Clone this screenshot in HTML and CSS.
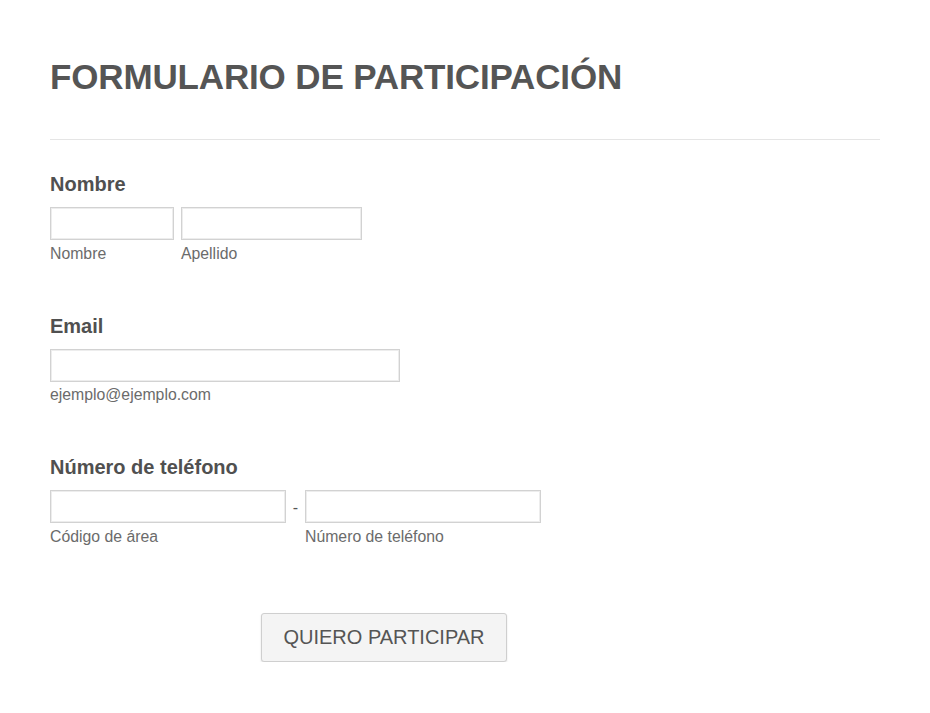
FILE: index.html
```html
<!DOCTYPE html>
<html lang="es">
<head>
<meta charset="utf-8">
<title>Formulario de participación</title>
<link rel="stylesheet" href="styles.css">
</head>
<body>
<form class="form">
  <h1 class="title">FORMULARIO DE PARTICIPACIÓN</h1>
  <hr class="divider">

  <div class="field">
    <div class="label">Nombre</div>
    <div class="row">
      <div class="part">
        <input class="input w-first" type="text">
        <span class="sub">Nombre</span>
      </div>
      <div class="part">
        <input class="input w-last" type="text">
        <span class="sub">Apellido</span>
      </div>
    </div>
  </div>

  <div class="field">
    <div class="label">Email</div>
    <div class="part">
      <input class="input w-email" type="text">
      <span class="sub">ejemplo@ejemplo.com</span>
    </div>
  </div>

  <div class="field">
    <div class="label">Número de teléfono</div>
    <div class="row phone">
      <div class="part">
        <input class="input w-phone" type="text">
        <span class="sub">Código de área</span>
      </div>
      <span class="dash">-</span>
      <div class="part">
        <input class="input w-phone" type="text">
        <span class="sub">Número de teléfono</span>
      </div>
    </div>
  </div>

  <div class="actions">
    <button class="submit" type="button">QUIERO PARTICIPAR</button>
  </div>
</form>
</body>
</html>
```

FILE: styles.css
```css
* { box-sizing: border-box; }
html, body { margin: 0; padding: 0; background: #fff; }
body { font-family: "Liberation Sans", Arial, sans-serif; color: #555; }

.form {
  width: 880px;
  padding: 55px 0 0 50px;
}

.title {
  margin: 0;
  font-size: 35px;
  line-height: 43px;
  font-weight: 700;
  color: #555;
  letter-spacing: -0.15px;
}

.divider {
  margin: 41px 0 0 0;
  border: 0;
  border-top: 1px solid #e5e5e5;
  height: 0;
}

.field { margin-top: 32px; }
.field + .field { margin-top: 51px; }

.label {
  font-size: 20px;
  line-height: 24px;
  font-weight: 700;
  color: #505050;
  margin-bottom: 11px;
}

.row { display: flex; align-items: flex-start; gap: 7px; }
.row.phone { gap: 0; }

.part { display: flex; flex-direction: column; }

.input {
  display: block;
  height: 33px;
  margin: 0;
  padding: 0 6px;
  border: 1px solid #d2d2d2;
  box-shadow: inset 0 0 0 1px #ededed;
  background: #fff;
  font: inherit;
  outline: none;
}
.w-first { width: 124px; }
.w-last { width: 181px; }
.w-email { width: 350px; }
.w-phone { width: 236px; }

.sub {
  margin-top: 4.5px;
  font-size: 15.8px;
  line-height: 18px;
  color: #6b6b6b;
}

.dash {
  width: 19px;
  text-align: center;
  font-size: 16px;
  line-height: 36px;
  color: #555;
}

.actions {
  padding: 67px 0 0 211px;
}

.submit {
  width: 246px;
  height: 49px;
  border: 1px solid #cfcfcf;
  border-radius: 3px;
  background: #f4f4f4;
  box-shadow: 0 1px 2px rgba(0,0,0,0.12);
  font-family: "Liberation Sans", Arial, sans-serif;
  font-size: 20px;
  color: #555;
  padding: 0;
  cursor: pointer;
}
```
